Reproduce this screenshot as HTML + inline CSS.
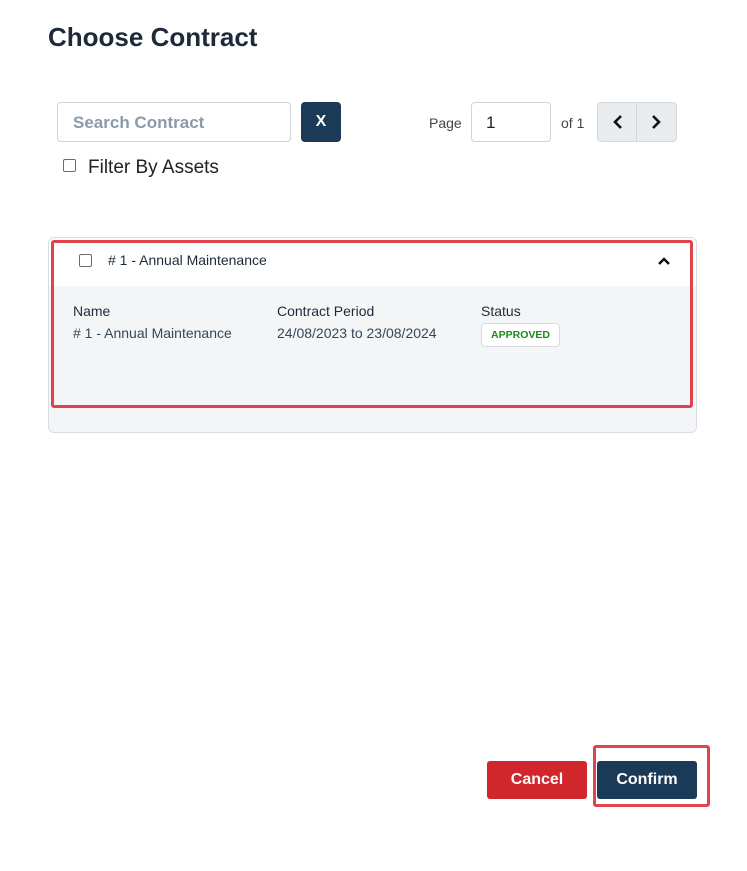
<!DOCTYPE html>
<html><head><style>
body{margin:0;width:747px;height:871px;background:#fff;font-family:"Liberation Sans",sans-serif;position:relative;overflow:hidden;color:#1e2a3a}
.a{position:absolute}
.inp{border:1px solid #ced4da;border-radius:4px;background:#fff;box-sizing:border-box}
.cb{border:1.5px solid #6b6b6b;border-radius:2px;box-sizing:border-box;background:#fff}
</style></head><body>
<div class="a" style="left:48px;top:22px;font-size:26px;font-weight:bold;color:#1e2a3a">Choose Contract</div>
<div class="a inp" style="left:57px;top:102px;width:234px;height:40px;"></div>
<div class="a" style="left:73px;top:113px;font-size:17px;color:#8a9aab;font-weight:bold">Search Contract</div>
<div class="a" style="left:301px;top:102px;width:40px;height:40px;background:#1b3a57;border-radius:4px;color:#fff;font-weight:bold;font-size:16px;text-align:center;line-height:40px">X</div>
<div class="a" style="left:429px;top:115px;font-size:14px;color:#444">Page</div>
<div class="a inp" style="left:471px;top:102px;width:80px;height:40px;"></div>
<div class="a" style="left:486px;top:113px;font-size:17px;color:#222">1</div>
<div class="a" style="left:561px;top:115px;font-size:14px;color:#444">of 1</div>
<div class="a" style="left:597px;top:102px;width:80px;height:40px;background:#e9ecef;border:1px solid #d5d9de;border-radius:4px;box-sizing:border-box"></div>
<div class="a" style="left:636px;top:103px;width:1px;height:38px;background:#d0d4d9"></div>
<svg class="a" style="left:608px;top:112px" width="20" height="20"><path d="M13 4 L7 10 L13 16" stroke="#111" stroke-width="2.6" fill="none"/></svg>
<svg class="a" style="left:646px;top:112px" width="20" height="20"><path d="M7 4 L13 10 L7 16" stroke="#111" stroke-width="2.6" fill="none"/></svg>
<div class="a cb" style="left:63px;top:159px;width:13px;height:13px"></div>
<div class="a" style="left:88px;top:157px;font-size:19px;color:#222">Filter By Assets</div>

<div class="a" style="left:48px;top:237px;width:649px;height:196px;border:1px solid #d7dde3;border-radius:6px;background:#f4f5f7;box-sizing:border-box;overflow:hidden">
<div style="height:48px;background:#fff"></div>
</div>
<div class="a" style="left:51px;top:240px;width:642px;height:168px;border:3px solid #e0434b;border-radius:3px;box-sizing:border-box"></div>
<div class="a cb" style="left:79px;top:254px;width:13px;height:13px"></div>
<div class="a" style="left:108px;top:252px;font-size:14px;color:#1e2a3a">#&nbsp;1 - Annual Maintenance</div>
<svg class="a" style="left:657px;top:254px" width="14" height="14"><path d="M2 10 L7 5 L12 10" stroke="#111" stroke-width="2.4" fill="none"/></svg>
<div class="a" style="left:73px;top:303px;font-size:14px">Name</div>
<div class="a" style="left:277px;top:303px;font-size:14px">Contract Period</div>
<div class="a" style="left:481px;top:303px;font-size:14px">Status</div>
<div class="a" style="left:73px;top:325px;font-size:14px;color:#34475a"># 1 - Annual Maintenance</div>
<div class="a" style="left:277px;top:325px;font-size:14px;color:#34475a">24/08/2023 to 23/08/2024</div>
<div class="a" style="left:481px;top:323px;width:79px;height:24px;border:1px solid #d8dcdf;border-radius:4px;background:#fff;box-sizing:border-box;color:#1a8a1a;font-size:10.5px;font-weight:bold;text-align:center;line-height:22px">APPROVED</div>

<div class="a" style="left:487px;top:761px;width:100px;height:38px;background:#d0262c;border-radius:3px;color:#fff;font-weight:bold;font-size:16px;text-align:center;line-height:38px">Cancel</div>
<div class="a" style="left:597px;top:761px;width:100px;height:38px;background:#1b3a57;border-radius:3px;color:#fff;font-weight:bold;font-size:16px;text-align:center;line-height:38px">Confirm</div>
<div class="a" style="left:593px;top:745px;width:117px;height:62px;border:3px solid #e0434b;border-radius:3px;box-sizing:border-box"></div>
</body></html>
